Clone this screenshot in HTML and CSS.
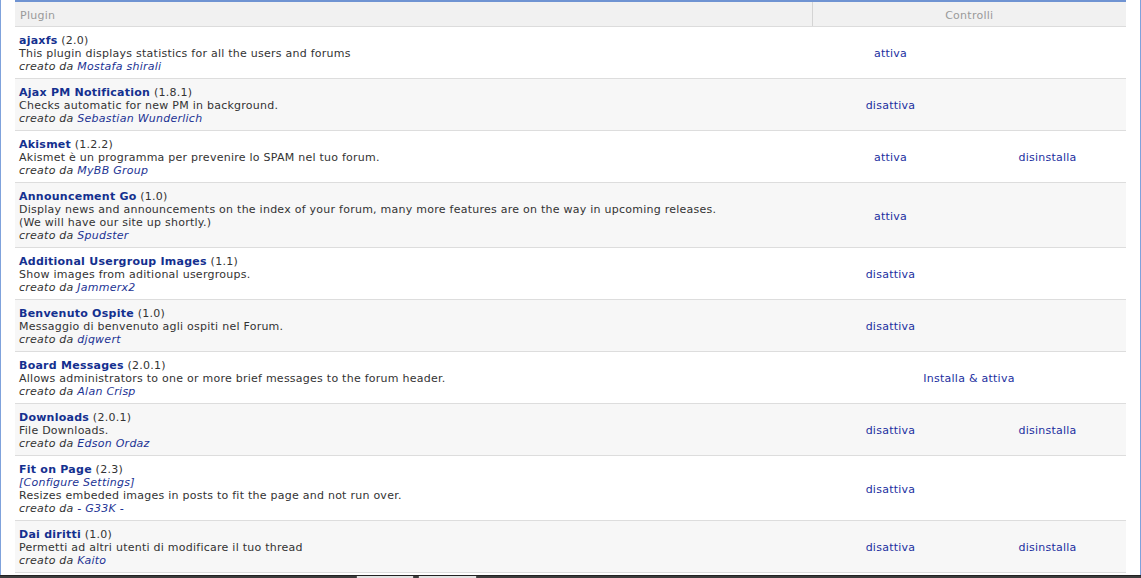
FILE: index.html
```html
<!DOCTYPE html>
<html>
<head>
<meta charset="utf-8">
<link rel="stylesheet" href="styles.css">
</head>
<body>
<div class="frame">
  <table class="plugins">
    <colgroup>
      <col class="c-plugin">
      <col class="c-ctl">
      <col class="c-ctl">
    </colgroup>
    <thead>
      <tr>
        <th class="h-plugin">Plugin</th>
        <th class="h-ctl" colspan="2">Controlli</th>
      </tr>
    </thead>
    <tbody>
      <tr>
        <td class="info"><a class="name">ajaxfs</a> (2.0)<br>This plugin displays statistics for all the users and forums<br><i>creato da <a class="author">Mostafa shirali</a></i></td>
        <td class="ctl"><a>attiva</a></td>
        <td class="ctl"></td>
      </tr>
      <tr class="alt">
        <td class="info"><a class="name">Ajax PM Notification</a> (1.8.1)<br>Checks automatic for new PM in background.<br><i>creato da <a class="author">Sebastian Wunderlich</a></i></td>
        <td class="ctl"><a>disattiva</a></td>
        <td class="ctl"></td>
      </tr>
      <tr>
        <td class="info"><a class="name">Akismet</a> (1.2.2)<br>Akismet è un programma per prevenire lo SPAM nel tuo forum.<br><i>creato da <a class="author">MyBB Group</a></i></td>
        <td class="ctl"><a>attiva</a></td>
        <td class="ctl"><a>disinstalla</a></td>
      </tr>
      <tr class="alt">
        <td class="info"><a class="name">Announcement Go</a> (1.0)<br>Display news and announcements on the index of your forum, many more features are on the way in upcoming releases.<br>(We will have our site up shortly.)<br><i>creato da <a class="author">Spudster</a></i></td>
        <td class="ctl"><a>attiva</a></td>
        <td class="ctl"></td>
      </tr>
      <tr>
        <td class="info"><a class="name">Additional Usergroup Images</a> (1.1)<br>Show images from aditional usergroups.<br><i>creato da <a class="author">Jammerx2</a></i></td>
        <td class="ctl"><a>disattiva</a></td>
        <td class="ctl"></td>
      </tr>
      <tr class="alt">
        <td class="info"><a class="name">Benvenuto Ospite</a> (1.0)<br>Messaggio di benvenuto agli ospiti nel Forum.<br><i>creato da <a class="author">djqwert</a></i></td>
        <td class="ctl"><a>disattiva</a></td>
        <td class="ctl"></td>
      </tr>
      <tr>
        <td class="info"><a class="name">Board Messages</a> (2.0.1)<br>Allows administrators to one or more brief messages to the forum header.<br><i>creato da <a class="author">Alan Crisp</a></i></td>
        <td class="ctl" colspan="2"><a>Installa &amp; attiva</a></td>
      </tr>
      <tr class="alt">
        <td class="info"><a class="name">Downloads</a> (2.0.1)<br>File Downloads.<br><i>creato da <a class="author">Edson Ordaz</a></i></td>
        <td class="ctl"><a>disattiva</a></td>
        <td class="ctl"><a>disinstalla</a></td>
      </tr>
      <tr>
        <td class="info"><a class="name">Fit on Page</a> (2.3)<br><i><a class="author">[Configure Settings]</a></i><br>Resizes embeded images in posts to fit the page and not run over.<br><i>creato da <a class="author">- G33K -</a></i></td>
        <td class="ctl"><a>disattiva</a></td>
        <td class="ctl"></td>
      </tr>
      <tr class="alt">
        <td class="info"><a class="name">Dai diritti</a> (1.0)<br>Permetti ad altri utenti di modificare il tuo thread<br><i>creato da <a class="author">Kaito</a></i></td>
        <td class="ctl"><a>disattiva</a></td>
        <td class="ctl"><a>disinstalla</a></td>
      </tr>
    </tbody>
  </table>
</div>
<div class="taskbar">
  <span class="tab tab1"></span>
  <span class="tab tab2"></span>
</div>
</body>
</html>
```

FILE: styles.css
```css
html, body {
  margin: 0;
  padding: 0;
  background: #ffffff;
}

body {
  font-family: "DejaVu Sans", Verdana, sans-serif;
  font-size: 11px;
  line-height: 13px;
  letter-spacing: 0.25px;
  color: #333333;
  width: 1141px;
  height: 578px;
  overflow: hidden;
}

.frame {
  box-sizing: border-box;
  height: 575px;
  border-left: 1px solid #7fa2dc;
  border-right: 1px solid #7fa2dc;
  padding: 0 14px;
  overflow: hidden;
}

.plugins {
  width: 1111px;
  border-collapse: collapse;
  table-layout: fixed;
  border-top: 2px solid #6f93d2;
}

.c-plugin { width: 797px; }
.c-ctl { width: 157px; }

.plugins th {
  background: #f1f1f1;
  color: #9a9a9a;
  font-weight: normal;
  padding: 7px 5px 4px 5px;
  border-bottom: 1px solid #dcdcdc;
  line-height: 13px;
}

.h-plugin {
  text-align: left;
}

.h-ctl {
  text-align: center;
  border-left: 1px solid #d4d4d4;
}

.plugins td {
  padding: 7px 5px 5px 4px;
  border-bottom: 1px solid #dddddd;
  vertical-align: middle;
  background: #ffffff;
}

.plugins tr.alt td {
  background: #f7f7f7;
}

.plugins td.ctl {
  text-align: center;
  padding: 7px 0 5px 0;
}

a {
  color: #1c2fa0;
  text-decoration: none;
}

a.name {
  color: #14308f;
  font-weight: bold;
}

a.author {
  color: #1c3394;
}

i {
  font-style: italic;
}

.taskbar {
  position: relative;
  height: 3px;
  background: #3c3c3c;
  border-top: 1px solid #222222;
  box-sizing: border-box;
}

.tab {
  position: absolute;
  top: 0;
  height: 3px;
  background: #e2e2e2;
  border-left: 1px solid #555;
  border-right: 1px solid #555;
}

.tab1 { left: 356px; width: 56px; }
.tab2 { left: 418px; width: 57px; }
```
